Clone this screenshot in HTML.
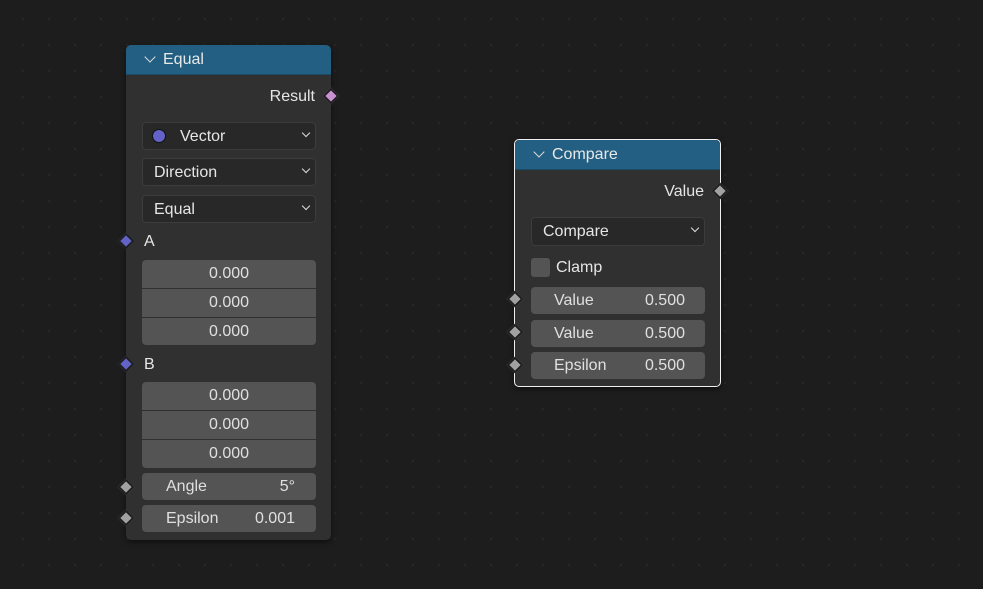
<!DOCTYPE html><html><head><style>
body{margin:0;width:983px;height:589px;background:#1d1d1d;background-image:radial-gradient(#262626 1px,transparent 1.5px);background-size:26px 26px;background-position:10px 6px;position:relative;overflow:hidden;font-family:"Liberation Sans",sans-serif;color:#e6e6e6;font-size:16px}
.a{position:absolute}
.node{position:absolute;background:#303030;border-radius:5px;box-shadow:0 2px 6px rgba(0,0,0,.5)}
.hd{position:absolute;left:0;right:0;top:0;height:29px;background:#225f82;border-radius:5px 5px 0 0;border-bottom:1px solid #1a4a66}
.hd span{position:absolute;left:37px;top:6px;color:#e8e8e8}
.chev{position:absolute;left:20px;top:8px;width:7px;height:7px;border-right:1.6px solid #ddd;border-bottom:1.6px solid #ddd;transform:rotate(45deg)}
.dd{position:absolute;background:#282828;border:1px solid #3c3c3c;border-radius:4px;box-sizing:border-box}
.dd span{position:absolute;left:11px;top:5px}
.dd i{position:absolute;right:6px;top:7px;width:5px;height:5px;border-right:1.3px solid #ddd;border-bottom:1.3px solid #ddd;transform:rotate(45deg)}
.num{position:absolute;background:#545454;box-sizing:border-box;text-align:center;line-height:28px;color:#e0e0e0}
.sock{position:absolute;width:8px;height:8px;transform:rotate(45deg);border:2px solid #1e1e1e;}
</style></head><body>
<div class="node" style="left:126px;top:45px;width:205px;height:495px">
<div class="hd"><div class="chev"></div><span>Equal</span></div>
<div class="a" style="right:16px;top:43px">Result</div>
<div class="dd" style="left:16px;top:77px;width:174px;height:28px"><div class="a" style="left:9px;top:6px;width:12px;height:12px;border-radius:50%;background:#6363c7;border:1px solid #111"></div><span style="left:37px">Vector</span><i></i></div>
<div class="dd" style="left:16px;top:113px;width:174px;height:28px"><span>Direction</span><i></i></div>
<div class="dd" style="left:16px;top:150px;width:174px;height:28px"><span>Equal</span><i></i></div>
<div class="a" style="left:18px;top:188px">A</div>
<div class="num" style="left:16px;top:215px;width:174px;height:28px;border-radius:4px 4px 0 0">0.000</div>
<div class="num" style="left:16px;top:244px;width:174px;height:28px">0.000</div>
<div class="num" style="left:16px;top:273px;width:174px;height:27px;border-radius:0 0 4px 4px">0.000</div>
<div class="a" style="left:18px;top:311px">B</div>
<div class="num" style="left:16px;top:337px;width:174px;height:28px;border-radius:4px 4px 0 0">0.000</div>
<div class="num" style="left:16px;top:366px;width:174px;height:28px">0.000</div>
<div class="num" style="left:16px;top:395px;width:174px;height:28px;border-radius:0 0 4px 4px">0.000</div>
<div class="num" style="left:16px;top:428px;width:174px;height:27px;border-radius:4px;text-align:left"><span style="position:absolute;left:24px">Angle</span><span style="position:absolute;right:21px">5°</span></div>
<div class="num" style="left:16px;top:460px;width:174px;height:27px;border-radius:4px;text-align:left"><span style="position:absolute;left:24px">Epsilon</span><span style="position:absolute;right:21px">0.001</span></div>
</div>
<div class="sock" style="left:325px;top:90px;background:#c98fd0"></div>
<div class="sock" style="left:120px;top:235px;background:#6363c7"></div>
<div class="sock" style="left:120px;top:358px;background:#6363c7"></div>
<div class="sock" style="left:120px;top:481px;background:#a1a1a1"></div>
<div class="sock" style="left:120px;top:512px;background:#a1a1a1"></div>

<div class="node" style="left:514px;top:139px;width:205px;height:246px;border:1px solid #f0f0f0">
<div class="hd"><div class="chev"></div><span>Compare</span></div>
<div class="a" style="right:16px;top:43px">Value</div>
<div class="dd" style="left:16px;top:77px;width:174px;height:29px"><span>Compare</span><i></i></div>
<div class="a" style="left:16px;top:118px;width:19px;height:19px;background:#545454;border-radius:3px"></div>
<div class="a" style="left:41px;top:119px">Clamp</div>
<div class="num" style="left:16px;top:147px;width:174px;height:27px;border-radius:4px;text-align:left"><span style="position:absolute;left:23px">Value</span><span style="position:absolute;right:20px">0.500</span></div>
<div class="num" style="left:16px;top:180px;width:174px;height:27px;border-radius:4px;text-align:left"><span style="position:absolute;left:23px">Value</span><span style="position:absolute;right:20px">0.500</span></div>
<div class="num" style="left:16px;top:212px;width:174px;height:27px;border-radius:4px;text-align:left"><span style="position:absolute;left:23px">Epsilon</span><span style="position:absolute;right:20px">0.500</span></div>
</div>
<div class="sock" style="left:714px;top:185px;background:#a1a1a1"></div>
<div class="sock" style="left:509px;top:293px;background:#a1a1a1"></div>
<div class="sock" style="left:509px;top:326px;background:#a1a1a1"></div>
<div class="sock" style="left:509px;top:359px;background:#a1a1a1"></div>
</body></html>
